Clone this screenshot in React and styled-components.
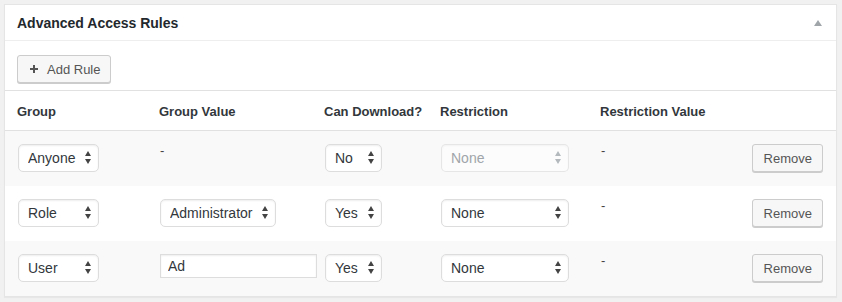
import React from 'react';
import styled, { createGlobalStyle } from 'styled-components';

const GlobalStyle = createGlobalStyle`
  html, body {
    margin: 0;
    padding: 0;
    background: #f1f1f1;
  }
  body {
    font-family: "Liberation Sans", Arial, sans-serif;
    font-size: 13px;
    color: #444;
  }
  #root {
    padding: 4px 5px 5px 4px;
  }
`;

const Panel = styled.div`
  background: #fff;
  border: 1px solid #e5e5e5;
  box-shadow: 0 1px 1px rgba(0, 0, 0, 0.04);
`;

const PanelHeader = styled.div`
  display: flex;
  align-items: center;
  justify-content: space-between;
  height: 35px;
  padding: 0 14px 0 12px;
  border-bottom: 1px solid #eee;
`;

const Title = styled.h2`
  margin: 0;
  font-size: 14px;
  font-weight: 700;
  color: #23282d;
`;

const Toggle = styled.span`
  display: flex;
  color: #a0a5aa;
`;

const Toolbar = styled.div`
  padding: 14px 12px 7px;
  border-bottom: 1px solid #e1e1e1;
`;

const Button = styled.button`
  display: inline-flex;
  align-items: center;
  gap: 9px;
  box-sizing: border-box;
  height: 28px;
  padding: 0 10px 0 ${p => (p.$withIcon ? 12 : 11)}px;
  font: 13px "Liberation Sans", Arial, sans-serif;
  color: #555;
  background: #f7f7f7;
  border: 1px solid #ccc;
  border-radius: 3px;
  box-shadow: 0 1px 0 #ccc;
  cursor: pointer;
  white-space: nowrap;
`;

const Row = styled.div`
  display: grid;
  grid-template-columns: 142px 165px 116px 160px 1fr auto;
  padding: 0 13px 0 12px;
  box-sizing: border-box;
  background: ${p => (p.$striped ? '#f9f9f9' : '#fff')};
`;

const HeadRow = styled(Row)`
  height: 40px;
  padding-top: 2px;
  align-items: center;
  border-bottom: 1px solid #e1e1e1;
`;

const HeadCell = styled.div`
  font-size: 13px;
  font-weight: 700;
  color: #32373c;
`;

const BodyRow = styled(Row)`
  height: 55px;
  align-items: start;
  padding-top: 13px;
`;

const Cell = styled.div`
  display: flex;
  justify-content: ${p => (p.$end ? 'flex-end' : 'flex-start')};
  padding-left: ${p => (p.$inset ? 1 : 0)}px;
`;

const Empty = styled.span`
  font-size: 13px;
  line-height: 14px;
  color: #444;
`;

const SelectWrap = styled.span`
  position: relative;
  display: inline-flex;
  width: ${p => p.$width}px;
  color: ${p => (p.$disabled ? '#b4b9be' : '#444')};
`;

const Select = styled.select`
  appearance: none;
  -webkit-appearance: none;
  width: 100%;
  height: 28px;
  margin: 0;
  padding: 0 20px 0 9px;
  font: 14px "Liberation Sans", Arial, sans-serif;
  color: #32373c;
  background: #fff;
  border: 1px solid #ddd;
  border-radius: 5px;
  box-shadow: inset 0 1px 2px rgba(0, 0, 0, 0.07);
  outline: none;

  &:disabled {
    color: #a0a5aa;
    background: rgba(255, 255, 255, 0.5);
    border-color: rgba(222, 222, 222, 0.75);
    box-shadow: inset 0 1px 2px rgba(0, 0, 0, 0.04);
    opacity: 1;
  }
`;

const Arrows = styled.svg`
  position: absolute;
  right: 8px;
  top: 7px;
  pointer-events: none;
`;

const TextInput = styled.input`
  box-sizing: border-box;
  width: 157px;
  height: 24px;
  margin: 0;
  padding: 0 7px;
  font: 14px "Liberation Sans", Arial, sans-serif;
  color: #32373c;
  background: #fff;
  border: 1px solid #ddd;
  box-shadow: inset 0 1px 2px rgba(0, 0, 0, 0.07);
  outline: none;
`;

const Dropdown = ({ width, value, options, disabled }) => (
  <SelectWrap $width={width} $disabled={disabled}>
    <Select defaultValue={value} disabled={disabled}>
      {options.map(o => (
        <option key={o}>{o}</option>
      ))}
    </Select>
    <Arrows width="6" height="13" viewBox="0 0 6 13">
      <polygon points="0,5 3,0 6,5" fill="currentColor" />
      <polygon points="0,8 6,8 3,13" fill="currentColor" />
    </Arrows>
  </SelectWrap>
);

const GROUPS = ['Anyone', 'Role', 'User'];
const YES_NO = ['Yes', 'No'];
const RESTRICTIONS = ['None', 'Download limit', 'Expiry date'];

const RULES = [
  { id: 1, group: 'Anyone', value: null, download: 'No', restriction: 'None', locked: true },
  { id: 2, group: 'Role', value: { kind: 'select', text: 'Administrator' }, download: 'Yes', restriction: 'None' },
  { id: 3, group: 'User', value: { kind: 'input', text: 'Ad' }, download: 'Yes', restriction: 'None' },
];

const PlusIcon = () => (
  <svg width="8" height="8" viewBox="0 0 8 8">
    <path d="M4 0v8M0 4h8" stroke="currentColor" strokeWidth="2" />
  </svg>
);

export default function App() {
  return (
    <>
      <GlobalStyle />
      <Panel>
        <PanelHeader>
          <Title>Advanced Access Rules</Title>
          <Toggle>
            <svg width="8" height="6" viewBox="0 0 8 6">
              <polygon points="0,6 4,0 8,6" fill="currentColor" />
            </svg>
          </Toggle>
        </PanelHeader>

        <Toolbar>
          <Button $withIcon>
            <PlusIcon />
            Add Rule
          </Button>
        </Toolbar>

        <HeadRow>
          <HeadCell>Group</HeadCell>
          <HeadCell>Group Value</HeadCell>
          <HeadCell>Can Download?</HeadCell>
          <HeadCell>Restriction</HeadCell>
          <HeadCell>Restriction Value</HeadCell>
          <HeadCell />
        </HeadRow>

        {RULES.map((rule, i) => (
          <BodyRow key={rule.id} $striped={i % 2 === 0}>
            <Cell $inset>
              <Dropdown width={81} value={rule.group} options={GROUPS} />
            </Cell>
            <Cell $inset>
              {!rule.value && <Empty>-</Empty>}
              {rule.value && rule.value.kind === 'select' && (
                <Dropdown width={116} value={rule.value.text} options={[rule.value.text]} />
              )}
              {rule.value && rule.value.kind === 'input' && (
                <TextInput defaultValue={rule.value.text} />
              )}
            </Cell>
            <Cell $inset>
              <Dropdown width={57} value={rule.download} options={YES_NO} />
            </Cell>
            <Cell $inset>
              <Dropdown
                width={128}
                value={rule.restriction}
                options={RESTRICTIONS}
                disabled={rule.locked}
              />
            </Cell>
            <Cell $inset>
              <Empty>-</Empty>
            </Cell>
            <Cell $end>
              <Button>Remove</Button>
            </Cell>
          </BodyRow>
        ))}
      </Panel>
    </>
  );
}
